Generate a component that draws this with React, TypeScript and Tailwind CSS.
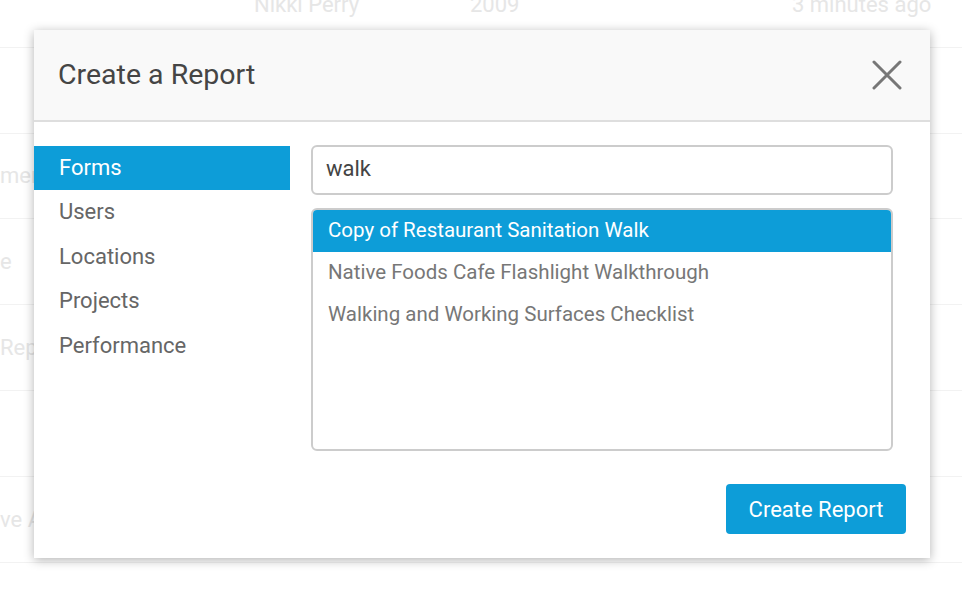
const rows = [
  {a: '', b: 'Nikki Perry', c: '2009', d: '3 minutes ago'},
  {a: '', b: '', c: '', d: ''},
  {a: 'mer', b: '', c: '', d: ''},
  {a: 'e', b: '', c: '', d: ''},
  {a: 'Rep', b: '', c: '', d: ''},
  {a: '', b: '', c: '', d: ''},
  {a: 've A', b: '', c: '', d: ''},
  {a: '', b: '', c: '', d: ''},
];

const categories = ['Forms', 'Users', 'Locations', 'Projects', 'Performance'];

const results = [
  'Copy of Restaurant Sanitation Walk',
  'Native Foods Cafe Flashlight Walkthrough',
  'Walking and Working Surfaces Checklist',
];

function BackgroundTable() {
  return (
    <div className="mt-[-38px] text-[22px] text-[#e6e6e6]">
      {rows.map((r, i) => (
        <div key={i} className="flex h-[85.8px] items-center border-b border-[#f2f2f2]">
          <div className="w-[254px]">{r.a}</div>
          <div className="w-[216px]">{r.b}</div>
          <div className="w-[322px]">{r.c}</div>
          <div className="flex-1 whitespace-nowrap">{r.d}</div>
        </div>
      ))}
    </div>
  );
}

function CloseIcon() {
  return (
    <svg width="30" height="30" viewBox="0 0 30 30" fill="none">
      <path d="M2 2L28 28M28 2L2 28" stroke="#777" strokeWidth="3" strokeLinecap="round" />
    </svg>
  );
}

export default function App() {
  return (
    <div
      className="relative h-[592px] w-[962px] overflow-hidden bg-white"
      style={{fontFamily: 'Roboto, "Liberation Sans", sans-serif'}}
    >
      <BackgroundTable />

      <div className="absolute left-[34px] top-[30px] flex h-[528px] w-[896px] flex-col bg-white shadow-[0_2px_10px_rgba(0,0,0,0.3)]">
        <div className="flex h-[92px] items-center justify-between border-b-2 border-[#dedede] bg-[#f9f9f9] pl-[24px] pr-[28px]">
          <h1 className="text-[28.5px] text-[#454545]">Create a Report</h1>
          <CloseIcon />
        </div>

        <div className="flex pt-[23px]">
          <div className="w-[256px] pt-px">
            {categories.map((c, i) => (
              <div
                key={c}
                className={
                  i === 0
                    ? 'flex h-[44px] items-center bg-[#0d9dd8] pb-[2px] pl-[25px] text-[22px] text-white'
                    : 'flex h-[44.5px] items-center pb-[1px] pl-[25px] text-[22px] text-[#666]'
                }
              >
                {c}
              </div>
            ))}
          </div>

          <div className="ml-[21px] w-[582px]">
            <div className="flex h-[50px] items-center rounded-[6px] border-2 border-[#cccccc] px-[13px] pb-[3px] text-[22px] text-[#444]">
              walk
            </div>
            <div className="mt-[13px] h-[243px] overflow-hidden rounded-[6px] border-2 border-[#cccccc]">
              {results.map((r, i) => (
                <div
                  key={r}
                  className={
                    i === 0
                      ? 'flex h-[42px] items-center bg-[#0d9dd8] pb-[2px] pl-[15px] text-[20.5px] text-white'
                      : 'flex h-[42px] items-center pb-[2px] pl-[15px] text-[20.5px] text-[#777]'
                  }
                >
                  {r}
                </div>
              ))}
            </div>
          </div>
        </div>

        <div className="flex justify-end pr-[24px] pt-[33px]">
          <button className="h-[50px] w-[180px] rounded-[4px] bg-[#0d9dd8] text-[22px] text-white">
            Create Report
          </button>
        </div>
      </div>
    </div>
  );
}
